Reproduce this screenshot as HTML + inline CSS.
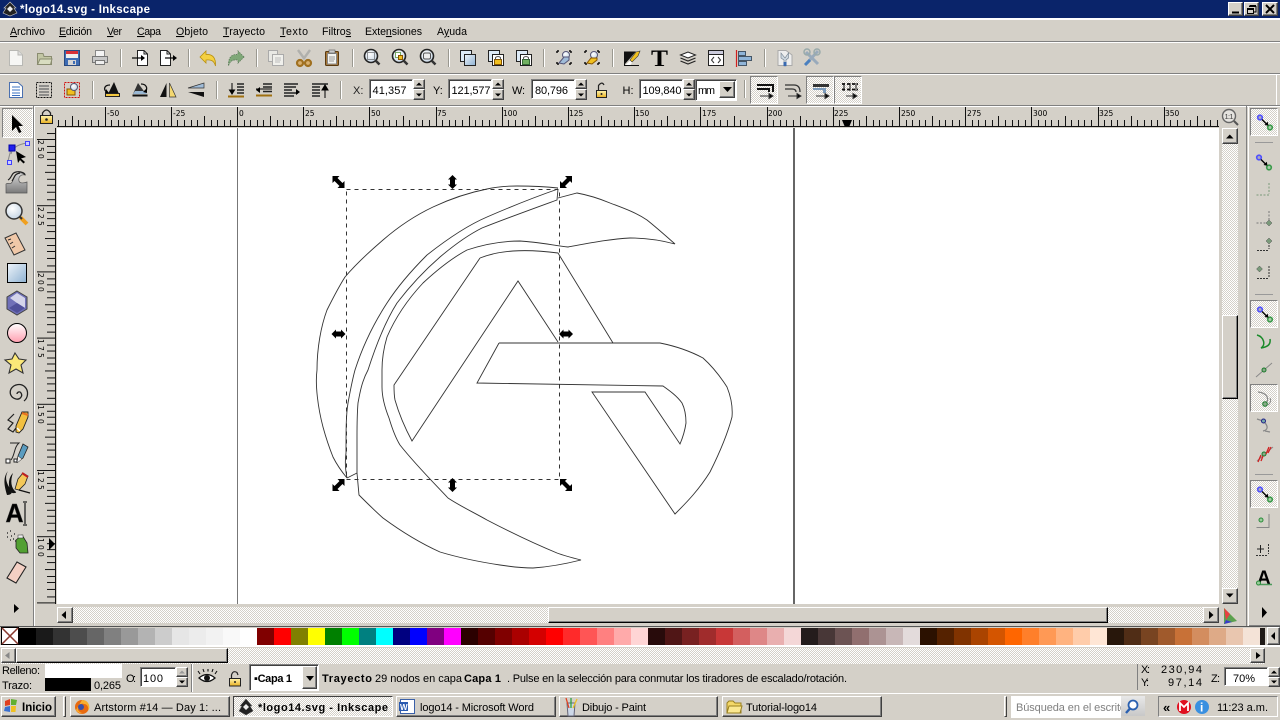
<!DOCTYPE html>
<html><head><meta charset="utf-8"><title>logo14.svg - Inkscape</title>
<style>
html,body{margin:0;padding:0;width:1280px;height:720px;overflow:hidden;background:#d4d0c8}
div{position:absolute;box-sizing:border-box}
.r{background:#d4d0c8;border:1px solid;border-color:#fff #404040 #404040 #fff;box-shadow:inset -1px -1px 0 #808080}
.s{background:#fff;border:1px solid;border-color:#808080 #fff #fff #808080;box-shadow:inset 1px 1px 0 #404040}
.h{background-image:repeating-conic-gradient(#fff 0 25%,#d4d0c8 0 50%);background-size:2px 2px}
.p{border:1px solid;border-color:#808080 #fff #fff #808080}
svg{position:absolute;left:0;top:0}
text{font-family:"Liberation Sans",sans-serif;font-size:11px;fill:#000}
.menu text{font-size:10.6px}
.b{font-weight:bold}
.m{font-family:"DejaVu Sans",sans-serif;font-size:7.5px;fill:#000}
</style></head><body>
<div style="left:0;top:0;width:1280px;height:18px;background:#0a246a"></div>
<div style="left:0;top:18px;width:1280px;height:2px;background:#fff"></div>
<div style="left:0;top:41px;width:1280px;height:1px;background:#808080"></div>
<div style="left:0;top:42px;width:1280px;height:1px;background:#fff"></div>
<div style="left:0;top:73px;width:1280px;height:1px;background:#808080"></div>
<div style="left:0;top:74px;width:1280px;height:1px;background:#fff"></div>
<div style="left:0;top:105px;width:1280px;height:1px;background:#808080"></div>
<div style="left:0;top:106px;width:1280px;height:1px;background:#fff"></div>
<div class="r" style="left:1228px;top:2px;width:15px;height:14px"></div>
<div class="r" style="left:1244px;top:2px;width:15px;height:14px"></div>
<div class="r" style="left:1262px;top:2px;width:16px;height:14px"></div>
<!-- canvas -->
<div style="left:57px;top:128px;width:1162px;height:476px;background:#fff"></div>
<div style="left:237px;top:128px;width:1px;height:476px;background:#777"></div>
<div style="left:793px;top:128px;width:2px;height:476px;background:#666"></div>
<!-- vscroll -->
<div class="h" style="left:1222px;top:128px;width:16px;height:476px"></div>
<div class="r" style="left:1222px;top:128px;width:16px;height:16px"></div>
<div class="r" style="left:1222px;top:315px;width:16px;height:84px;border-color:#fff #000 #000 #fff"></div>
<div class="r" style="left:1222px;top:588px;width:16px;height:16px"></div>
<!-- hscroll -->
<div class="h" style="left:57px;top:607px;width:1162px;height:16px"></div>
<div class="r" style="left:57px;top:607px;width:16px;height:16px"></div>
<div class="r" style="left:548px;top:607px;width:560px;height:16px;border-color:#fff #000 #000 #fff"></div>
<div class="r" style="left:1203px;top:607px;width:16px;height:16px"></div>
<!-- side lines -->
<div style="left:33px;top:106px;width:1px;height:520px;background:#808080"></div>
<div style="left:34px;top:106px;width:1px;height:520px;background:#fff"></div>
<div style="left:1246px;top:106px;width:1px;height:520px;background:#808080"></div>
<div style="left:1248px;top:106px;width:1px;height:520px;background:#fff"></div>
<div style="left:1249px;top:625px;width:31px;height:1px;background:#808080"></div>
<div style="left:1276px;top:75px;width:1px;height:30px;background:#fff"></div>
<!-- pressed toggles -->
<div class="h p" style="left:2px;top:108px;width:31px;height:30px"></div>
<div class="h p" style="left:1250px;top:108px;width:28px;height:28px"></div>
<div class="h p" style="left:1250px;top:300px;width:28px;height:28px"></div>
<div class="h p" style="left:1250px;top:384px;width:28px;height:28px"></div>
<div class="h p" style="left:1250px;top:480px;width:28px;height:28px"></div>
<div class="h p" style="left:750px;top:76px;width:28px;height:28px"></div>
<div class="h p" style="left:806px;top:76px;width:28px;height:28px"></div>
<div class="h p" style="left:834px;top:76px;width:28px;height:28px"></div>
<!-- inputs row 2 -->
<div class="s" style="left:369px;top:79px;width:44px;height:20px"></div>
<div class="r" style="left:413px;top:79px;width:12px;height:10px"></div><div class="r" style="left:413px;top:89px;width:12px;height:11px"></div>
<div class="s" style="left:448px;top:79px;width:44px;height:20px"></div>
<div class="r" style="left:492px;top:79px;width:12px;height:10px"></div><div class="r" style="left:492px;top:89px;width:12px;height:11px"></div>
<div class="s" style="left:531px;top:79px;width:44px;height:20px"></div>
<div class="r" style="left:575px;top:79px;width:12px;height:10px"></div><div class="r" style="left:575px;top:89px;width:12px;height:11px"></div>
<div class="s" style="left:639px;top:79px;width:44px;height:20px"></div>
<div class="r" style="left:683px;top:79px;width:12px;height:10px"></div><div class="r" style="left:683px;top:89px;width:12px;height:11px"></div>
<div class="s" style="left:695px;top:79px;width:42px;height:22px"></div>
<div class="r" style="left:719px;top:81px;width:16px;height:17px"></div>
<!-- palette scrollbars -->
<div style="left:0;top:626px;width:1280px;height:1px;background:#555"></div>
<div style="left:1px;top:627px;width:18px;height:18px;background:#fff;border:1px solid #000"></div>
<div class="r" style="left:1267px;top:627px;width:13px;height:18px"></div>
<div style="left:0;top:645px;width:1280px;height:2px;background:#fff"></div>
<div class="h" style="left:1px;top:648px;width:1264px;height:16px"></div>
<div class="r" style="left:1px;top:648px;width:15px;height:15px"></div>
<div class="r" style="left:16px;top:648px;width:212px;height:15px;border-color:#fff #000 #000 #fff"></div>
<div class="r" style="left:1250px;top:648px;width:15px;height:15px"></div>
<!-- status -->
<div style="left:45px;top:664px;width:77px;height:14px;background:#fff"></div>
<div style="left:45px;top:678px;width:46px;height:13px;background:#000"></div>
<div class="s" style="left:140px;top:667px;width:36px;height:20px"></div>
<div class="r" style="left:176px;top:667px;width:12px;height:10px"></div><div class="r" style="left:176px;top:677px;width:12px;height:10px"></div>
<div style="left:191px;top:664px;width:1px;height:28px;background:#808080"></div>
<div style="left:192px;top:664px;width:1px;height:28px;background:#fff"></div>
<div class="s" style="left:249px;top:664px;width:70px;height:27px"></div>
<div class="r" style="left:302px;top:666px;width:15px;height:23px"></div>
<div style="left:1137px;top:664px;width:1px;height:26px;background:#808080"></div>
<div class="s" style="left:1224px;top:667px;width:44px;height:19px"></div>
<div class="r" style="left:1268px;top:667px;width:12px;height:10px"></div><div class="r" style="left:1268px;top:677px;width:12px;height:10px"></div>
<!-- taskbar -->
<div style="left:0;top:693px;width:1280px;height:1px;background:#fff"></div>
<div class="r" style="left:1px;top:696px;width:55px;height:21px"></div>
<div class="r" style="left:63px;top:696px;width:3px;height:21px;box-shadow:none"></div>
<div class="r" style="left:70px;top:696px;width:160px;height:21px"></div>
<div class="h" style="left:233px;top:696px;width:160px;height:21px;border:1px solid;border-color:#404040 #fff #fff #404040"></div>
<div class="r" style="left:396px;top:696px;width:160px;height:21px"></div>
<div class="r" style="left:559px;top:696px;width:159px;height:21px"></div>
<div class="r" style="left:722px;top:696px;width:160px;height:21px"></div>
<div class="r" style="left:1004px;top:696px;width:3px;height:21px;box-shadow:none"></div>
<div style="left:1011px;top:696px;width:110px;height:22px;background:#fff"></div>
<div style="left:1121px;top:696px;width:24px;height:20px;background:linear-gradient(#e8e8e8,#c8c8c8)"></div>
<div class="p" style="left:1158px;top:696px;width:120px;height:21px"></div>

<svg width="1280" height="720" viewBox="0 0 1280 720" xmlns="http://www.w3.org/2000/svg">
<defs>
<linearGradient id="gb" x1="0" y1="0" x2="1" y2="1"><stop offset="0" stop-color="#eef4fa"/><stop offset="1" stop-color="#8fb2d2"/></linearGradient>
<linearGradient id="gp" x1="0" y1="0" x2="0" y2="1"><stop offset="0" stop-color="#fff"/><stop offset="1" stop-color="#ff9fb0"/></linearGradient>
<linearGradient id="gg" x1="0" y1="0" x2="0" y2="1"><stop offset="0" stop-color="#d8d8d8"/><stop offset="1" stop-color="#7a7a7a"/></linearGradient>
<linearGradient id="gy" x1="0" y1="0" x2="0" y2="1"><stop offset="0" stop-color="#fff5b0"/><stop offset="1" stop-color="#e8b020"/></linearGradient>
<radialGradient id="gm" cx=".4" cy=".35" r=".7"><stop offset="0" stop-color="#fff"/><stop offset="1" stop-color="#c4d4e4"/></radialGradient>
<pattern id="rt" patternUnits="userSpaceOnUse" x="237" y="107" width="331" height="20">
<path shape-rendering="crispEdges" stroke="#111" stroke-width="1" d="M.5 0V20M66.5 0V20M132.5 0V20M199.5 0V20M265.5 0V20
M33.5 9V20M99.5 9V20M166.5 9V20M232.5 9V20M298.5 9V20
M7.5 13V20M13.5 13V20M20.5 13V20M26.5 13V20M40.5 13V20M46.5 13V20M53.5 13V20M60.5 13V20
M73.5 13V20M79.5 13V20M86.5 13V20M93.5 13V20M106.5 13V20M113.5 13V20M119.5 13V20M126.5 13V20
M139.5 13V20M146.5 13V20M152.5 13V20M159.5 13V20M172.5 13V20M179.5 13V20M185.5 13V20M192.5 13V20
M205.5 13V20M212.5 13V20M218.5 13V20M225.5 13V20M238.5 13V20M245.5 13V20M252.5 13V20M258.5 13V20
M271.5 13V20M278.5 13V20M285.5 13V20M291.5 13V20M305.5 13V20M311.5 13V20M318.5 13V20M324.5 13V20"/>
</pattern>
<pattern id="rl" patternUnits="userSpaceOnUse" x="37" y="139" width="19" height="66.2">
<path shape-rendering="crispEdges" stroke="#111" stroke-width="1" d="M0 .5H19M10 7.5H19M10 13.5H19M10 20.5H19M10 26.5H19M8 33.5H19M10 40.5H19M10 46.5H19M10 53.5H19M10 60.5H19"/>
</pattern>
<path id="hd" d="M-6-6H1L-1-4 4 1 6-1V6H-1L1 4-4-1-6 1Z" fill="#000"/>
<path id="hv" d="M0-7 4.500-2.500H2.500V2.500H4.500L0 7-4.500 2.500H-2.500V-2.500H-4.500Z" fill="#000"/>
<g id="sn"><circle cx="-5" cy="-4.500" r="2.300" fill="#aab" stroke="#5050ff" stroke-width="1.600"/><circle cx="5" cy="5.500" r="2.300" fill="#aca" stroke="#3a9a4a" stroke-width="1.600"/><path d="M-3-2.500 2 2.500" stroke="#000" stroke-width="1.300"/><path d="M3.500 3.800-.5 3 2.800-.3Z"/></g>
<g id="mg"><circle cx="0" cy="0" r="6.500" fill="url(#gm)" stroke="#222" stroke-width="1.600"/><path d="M4.500 4.500 8.500 8.500" stroke="#333" stroke-width="2.500"/></g>
<g id="up"><path d="M-3 1.500H3L0-1.500Z"/></g>
<g id="dn"><path d="M-3-1.500H3L0 1.500Z"/></g>
</defs>

<!-- title -->
<path d="M10 2 16 8 14 8 17 13 10 16 3 13 6 8 4 8Z" fill="#222" stroke="#ccc" stroke-width=".6"/><path d="M7 9 10 6 13 9 10 12Z" fill="#eee"/>
<text x="20" y="13" class="b" style="fill:#fff;font-size:11.500px" textLength="130">*logo14.svg - Inkscape</text>
<path d="M1232 11.500h7v2h-7z"/><path d="M1249 6.500h7v5.500h-2M1247.500 8.500h6v5h-6zM1247.500 9.500h6M1249.500 5.500h6.500" fill="none" stroke="#000"/><path d="M1266 5 1274 13M1274 5 1266 13" stroke="#000" stroke-width="2"/>

<!-- menu -->
<g class="menu">
<text x="10" y="35" textLength="35"><tspan text-decoration="underline">A</tspan>rchivo</text>
<text x="59" y="35" textLength="33"><tspan text-decoration="underline">E</tspan>dición</text>
<text x="107" y="35" textLength="15"><tspan text-decoration="underline">V</tspan>er</text>
<text x="137" y="35" textLength="24"><tspan text-decoration="underline">C</tspan>apa</text>
<text x="176" y="35" textLength="32"><tspan text-decoration="underline">O</tspan>bjeto</text>
<text x="223" y="35" textLength="42"><tspan text-decoration="underline">T</tspan>rayecto</text>
<text x="280" y="35" textLength="28"><tspan text-decoration="underline">T</tspan>exto</text>
<text x="322" y="35" textLength="29">Filtro<tspan text-decoration="underline">s</tspan></text>
<text x="365" y="35" textLength="57">Exte<tspan text-decoration="underline">n</tspan>siones</text>
<text x="437" y="35" textLength="30">A<tspan text-decoration="underline">y</tspan>uda</text>
</g>

<!-- toolbar separators -->
<path shape-rendering="crispEdges" stroke="#9a9890" d="M120.500 49V67M188.500 49V67M256.500 49V67M352.500 49V67M448.500 49V67M543.500 49V67M612.500 49V67M764.500 49V67M92.500 81V99M216.500 81V99M340.500 81V99M744.500 80V98"/>
<path shape-rendering="crispEdges" stroke="#fff" d="M121.500 49V67M189.500 49V67M257.500 49V67M353.500 49V67M449.500 49V67M544.500 49V67M613.500 49V67M765.500 49V67M93.500 81V99M217.500 81V99M341.500 81V99M745.500 80V98"/>

<!-- row 1 -->
<path d="M9.500 50.500H18L22.500 55V65.500H9.500Z" fill="#f6f6f4" stroke="#b8b8b4"/><path d="M18 50.500V55H22.500" fill="#ddd" stroke="#b8b8b4"/>
<path d="M37.500 53.500V64.500H51.500V56.500H44L43 53.500Z" fill="#c2c6a4" stroke="#8a8c70"/><path d="M37.500 64.500 40 59H52L50.500 64.500Z" fill="#d8dcc0" stroke="#8a8c70"/>
<rect x="64.500" y="50.500" width="15" height="15" fill="#3d6cb4" stroke="#2a4a80"/><rect x="66" y="51" width="12" height="3" fill="#d83038"/><rect x="66" y="54" width="12" height="4" fill="#eee"/><rect x="68" y="60" width="8" height="5" fill="#d4d4d4"/><rect x="73" y="61" width="2" height="3" fill="#3d6cb4"/>
<rect x="95.500" y="50.500" width="9" height="6" fill="#f4f4f4" stroke="#888"/><path d="M92.500 56.500H107.500V62.500H92.500Z" fill="#c8c8c8" stroke="#777"/><rect x="95.500" y="60.500" width="9" height="4" fill="#eee" stroke="#777"/>
<path d="M137.500 50.500H144L147.500 54V65.500H137.500Z" fill="#fff" stroke="#222"/><path d="M144 50.500V54H147.500" fill="none" stroke="#222"/><path d="M132 58H142" stroke="#000" stroke-width="1.200"/><path d="M145 58 141 55V61Z"/>
<path d="M160.500 50.500H167L170.500 54V65.500H160.500Z" fill="#fff" stroke="#222"/><path d="M167 50.500V54H170.500" fill="none" stroke="#222"/><path d="M165 58H174" stroke="#000" stroke-width="1.200"/><path d="M177 58 173 55V61Z"/>
<path d="M200 57 206 51V54.500C212 54 216 57 215.500 66 214 60.500 211 59.500 206 60V63Z" fill="#f4d040" stroke="#b89010" stroke-width=".8"/>
<path d="M244 57 238 51V54.500C232 54 228 57 228.500 66 230 60.500 233 59.500 238 60V63Z" fill="#7fa878" stroke="#5a7a58" stroke-width=".8" stroke-dasharray="1.500 1"/>
<rect x="268.500" y="50.500" width="9" height="11" fill="#e8e8e4" stroke="#aaa"/><rect x="272.500" y="54.500" width="11" height="11" fill="#f0f0ec" stroke="#aaa"/><path d="M275 58H281M275 60H281M275 62H280" stroke="#bbb"/>
<path d="M298 50 304.500 59M310 50 303.500 59" stroke="#b0b0ac" stroke-width="2.400"/><circle cx="300" cy="63" r="3" fill="#d8b070" stroke="#a07020" stroke-width="2.200"/><circle cx="308" cy="63" r="3" fill="#d8b070" stroke="#a07020" stroke-width="2.200"/>
<rect x="325.500" y="51.500" width="13" height="14" rx="1" fill="#a87838" stroke="#5a3a10"/><rect x="327.500" y="53.500" width="9" height="10.500" fill="#f4f4f0" stroke="#888"/><rect x="329" y="50" width="6" height="3" fill="#ccc" stroke="#555" stroke-width=".6"/><path d="M329 57H335M329 59H335M329 61H334" stroke="#999"/>
<g transform="translate(371,56)"><use href="#mg"/><rect x="-3.500" y="-3.500" width="7" height="7" fill="none" stroke="#333" stroke-dasharray="1 1"/></g>
<g transform="translate(399,56)"><use href="#mg"/><rect x="-3.500" y="-3.500" width="5" height="5" fill="#fff" stroke="#7a6"/><rect x="-.5" y="-.5" width="4" height="4" fill="#f0c020" stroke="#850"/></g>
<g transform="translate(427,56)"><use href="#mg"/><rect x="-3.500" y="-3" width="7" height="6" rx="1.500" fill="#eee" stroke="#555"/></g>
<rect x="460.500" y="50.500" width="11" height="11" fill="#ddeaf6" stroke="#222"/><rect x="464.500" y="54.500" width="11" height="11" fill="url(#gb)" stroke="#222"/>
<rect x="488.500" y="50.500" width="11" height="11" fill="#ddeaf6" stroke="#222"/><rect x="492.500" y="54.500" width="11" height="11" fill="#fff" stroke="#222"/><rect x="494.500" y="59.500" width="7" height="5" fill="#f0c020" stroke="#850"/><path d="M495.500 59.500V57.500Q498 55.500 500.500 57.500V59.500" fill="none" stroke="#555"/>
<rect x="516.500" y="50.500" width="11" height="11" fill="#ddeaf6" stroke="#222"/><rect x="520.500" y="54.500" width="11" height="11" fill="#fff" stroke="#222"/><rect x="522.500" y="59.500" width="7" height="5" fill="#70b060" stroke="#363"/><path d="M523.500 59.500V57.500Q526 55.500 528.500 57.500V59.500" fill="none" stroke="#555"/>
<g><path d="M557 51h2M569 51h2M557 64h2M569 64h2M557 51v2M571 51v2M557 62v2M571 62v2" stroke="#111" stroke-width="1.500"/><circle cx="566" cy="55" r="3.500" fill="url(#gm)" stroke="#557"/><path d="M559 63 564 57H569V60L564 64Z" fill="#a0bcd8" stroke="#557"/></g>
<g><path d="M585 51h2M597 51h2M585 64h2M597 64h2M585 51v2M599 51v2M585 62v2M599 62v2" stroke="#111" stroke-width="1.500"/><circle cx="594" cy="55" r="3.500" fill="url(#gm)" stroke="#557"/><path d="M587 63 591 58H597V60L592 64Z" fill="#f0c020" stroke="#850"/></g>
<path d="M624.500 51.500H636L625 64Z" fill="#111"/><path d="M625 65.500 639 52V53L630 65.500Z" fill="#fff"/><path d="M624.500 51.500V65.500H639" fill="none" stroke="#111"/><path d="M630 60 636 52 640 51 638 56 632 62Z" fill="#f0c020" stroke="#333" stroke-width=".6"/>
<text x="651" y="66" style="font-family:'Liberation Serif',serif;font-weight:bold;font-size:23px" textLength="17" lengthAdjust="spacingAndGlyphs">T</text>
<path d="M680.500 55 688 52 695.500 55 688 58Z" fill="#fff" stroke="#222"/><path d="M680.500 58 688 61 695.500 58M680.500 61 688 64 695.500 61" fill="none" stroke="#222" stroke-width="1.200"/>
<rect x="708.500" y="50.500" width="15" height="15" fill="#fff" stroke="#222"/><rect x="709" y="51" width="14" height="3" fill="#ccd"/><path d="M708.500 54.500H723.500" stroke="#222"/><path d="M714 57 711.500 60 714 63M718 57 720.500 60 718 63" fill="none" stroke="#333"/>
<path d="M736.500 50V67" stroke="#d02020" stroke-width="1.200"/><rect x="738.500" y="51.500" width="7" height="4" fill="#8fb4d8" stroke="#456"/><rect x="738.500" y="56.500" width="13" height="4" fill="#8fb4d8" stroke="#456"/><rect x="738.500" y="61.500" width="8" height="4" fill="#8fb4d8" stroke="#456"/>
<path d="M778 50.500H786L792 55V65.500H778Z" fill="#eee" stroke="#aaa"/><path d="M781 53 785 58 788.500 53V58L786 60V66H784V60L781 58Z" fill="#cfd8e0" stroke="#6a7a88" stroke-width=".6"/><rect x="783.500" y="62" width="3" height="4" fill="#3a6ab0"/>
<path d="M806 52 818 64M818 51 806 64" stroke="#9ab" stroke-width="3"/><circle cx="807" cy="52" r="3" fill="none" stroke="#9aa" stroke-width="1.500"/><circle cx="817" cy="52" r="3" fill="none" stroke="#9aa" stroke-width="1.500"/><path d="M805 65 810 60" stroke="#4a80c0" stroke-width="3"/>

<!-- row 2 -->
<path d="M9.500 82.500H18L22.500 86.500V97.500H9.500Z" fill="#fff" stroke="#4a70b0"/><path d="M12 87H20M12 90H20M12 93H20M12 95.500H20" stroke="#3a70c0"/>
<rect x="36.500" y="82.500" width="15" height="15" fill="none" stroke="#111" stroke-dasharray="2 1"/><path d="M39 86H49M39 89H49M39 92H49M39 95H49" stroke="#777" stroke-width="1.500"/>
<rect x="64.500" y="82.500" width="15" height="15" fill="none" stroke="#d01010" stroke-dasharray="2 1"/><rect x="67" y="89" width="8" height="6" fill="#f0c020" stroke="#850"/><circle cx="74" cy="87" r="3.500" fill="url(#gm)" stroke="#557"/>
<path d="M108 94 114 82 119 94Z" fill="#111"/><rect x="105.500" y="93.500" width="14" height="3" fill="#f4c840" stroke="#222"/><path d="M110 85C104 85 103 90 107 92" fill="none" stroke="#111" stroke-width="1.300"/><path d="M105 93 109 93 106 89Z"/>
<path d="M133 94 138 83 146 94Z" fill="#333"/><path d="M133 94H147L145 91H135Z" fill="#9ab8d4"/><rect x="132.500" y="94.500" width="15" height="2" fill="#111"/><path d="M141 84C147 84 148 89 145 92" fill="none" stroke="#111" stroke-width="1.300"/><path d="M147 93 143 92 147 88Z"/>
<path d="M160 97 166.500 83V97Z" fill="#111"/><path d="M169.500 97V83L176 97Z" fill="#f4d870" stroke="#333" stroke-width=".7"/>
<path d="M188 88 204 83V88Z" fill="#a0bcd8" stroke="#333" stroke-width=".7"/><path d="M188 92 204 97V92Z" fill="#111"/>
<path d="M228 96.500H244" stroke="#a07010" stroke-width="2"/><path d="M232 83V92M232 94 229.500 90H234.500Z" stroke="#000"/><path d="M237 84H244M237 87H244M237 90H244M237 93H244" stroke="#222" stroke-width="1.500"/>
<path d="M256 89H272" stroke="#000"/><path d="M256 95.500H272" stroke="#a07010" stroke-width="2"/><path d="M263 84H272M263 87H272M263 91.500H272" stroke="#222" stroke-width="1.500"/><path d="M256 90 260 87V93Z"/>
<path d="M284 84H298M284 87H296M284 90H292M284 93H298M284 96H294" stroke="#222" stroke-width="1.500"/><path d="M300 92 296 89V95Z"/>
<path d="M312 84H328" stroke="#222" stroke-width="1.500"/><path d="M312 87H320M312 90H320M312 93H320M312 96H320" stroke="#222" stroke-width="1.500"/><path d="M325 98V87M325 85 322 90H328Z" stroke="#000"/>
<text x="353" y="94" style="fill:#222">X:</text>
<text x="372.500" y="94" textLength="34">41,357</text>
<text x="433" y="94">Y:</text>
<text x="451.500" y="94" textLength="39">121,577</text>
<text x="512" y="94" textLength="13">W:</text>
<text x="535" y="94" textLength="33">80,796</text>
<text x="622.500" y="94">H:</text>
<text x="642.500" y="94" textLength="39">109,840</text>
<text x="698" y="94" textLength="17">mm</text>
<g><use href="#up" x="419" y="84"/><use href="#dn" x="419" y="95"/><use href="#up" x="498" y="84"/><use href="#dn" x="498" y="95"/><use href="#up" x="581" y="84"/><use href="#dn" x="581" y="95"/><use href="#up" x="689" y="84"/><use href="#dn" x="689" y="95"/><path d="M723 87H732L727.500 92Z"/></g>
<path d="M596.500 90.500H606.500V97.500H596.500Z" fill="url(#gy)" stroke="#222"/><path d="M598.500 90V85.500Q602 81 604 85" fill="none" stroke="#222" stroke-width="1.200"/><circle cx="601.500" cy="94" r="1" fill="#222"/>
<!-- toggle icons -->
<path d="M757 85H773V92M757 89H769V92" fill="none" stroke="#111" stroke-width="2"/><path d="M760 96H770M773 96 769 93.500V98.500Z" stroke="#333"/>
<path d="M785 85H794Q800 85 800 92M785 89H792Q796 89 796 92" fill="none" stroke="#333" stroke-width="1.300"/><path d="M788 96H798M801 96 797 93.500V98.500Z" stroke="#333"/>
<rect x="813" y="84" width="16" height="3" fill="#333"/><path d="M813 88H826V93H823V90H813Z" fill="#7d9cbc"/><path d="M816 96H826M829 96 825 93.500V98.500Z" stroke="#333"/>
<path d="M842 84H858M842 89.500H858" stroke="#111" stroke-width="1.800" stroke-dasharray="3 2"/><path d="M844 83V91M850 83V91M856 83V91" stroke="#111"/><path d="M846 96H854M857 96 853 93.500V98.500Z" stroke="#333"/>

<!-- rulers -->
<rect x="57" y="107" width="1162" height="20" fill="url(#rt)"/>
<path d="M57 126.500H1219" stroke="#111" shape-rendering="crispEdges"/>
<rect x="37" y="128" width="19" height="476" fill="url(#rl)"/>
<path d="M55.500 128V604" stroke="#111" shape-rendering="crispEdges"/>
<g>
<text class="m" x="107" y="116">-50</text><text class="m" x="173" y="116">-25</text><text class="m" x="239" y="116">0</text><text class="m" x="305" y="116">25</text><text class="m" x="371" y="116">50</text><text class="m" x="437" y="116">75</text><text class="m" x="503" y="116">100</text><text class="m" x="569" y="116">125</text><text class="m" x="635" y="116">150</text><text class="m" x="702" y="116">175</text><text class="m" x="768" y="116">200</text><text class="m" x="834" y="116">225</text><text class="m" x="901" y="116">250</text><text class="m" x="967" y="116">275</text><text class="m" x="1033" y="116">300</text><text class="m" x="1099" y="116">325</text><text class="m" x="1165" y="116">350</text>
<text class="m" x="38 38 38" y="140 147 154" rotate="90">250</text>
<text class="m" x="38 38 38" y="207 214 221" rotate="90">225</text>
<text class="m" x="38 38 38" y="273 280 287" rotate="90">200</text>
<text class="m" x="38 38 38" y="339 346 353" rotate="90">175</text>
<text class="m" x="38 38 38" y="405 412 419" rotate="90">150</text>
<text class="m" x="38 38 38" y="471 478 485" rotate="90">125</text>
<text class="m" x="38 38 38" y="538 545 552" rotate="90">100</text>
</g>
<path d="M842 120H852L849.500 126H844.500Z"/><path d="M49 538V550L55 544Z"/>
<rect x="40.500" y="115.500" width="12" height="8" fill="url(#gy)" stroke="#222"/><path d="M42.500 115V113Q46.500 107 50.500 113V115" fill="none" stroke="#222" stroke-width="1.300"/><circle cx="46.500" cy="119.500" r="1.300" fill="#222"/>

<!-- logo -->
<g fill="none" stroke="#333" stroke-width=".9">
<path d="M558 188C540 186 529 186 517 186 505 186 496 187 487 189 467 193 450 199 433 207 414 216 398 227 383 240 369 252 356 264 345 277 338 288 333 298 327 310 321 326 317 348 317 370 315 385 318 408 323 427 326 438 329 447 333 457 337 465 342 472 347 478 345 468 345 460 346 453 346 430 346 415 348 403 350 392 352 381 355 370 363 345 374 323 387 303 398 286 412 270 427 255 446 240 466 226 487 217 510 207 535 197 558 189"/>
<path d="M558 189 557 200C535 208 510 217 482 228 466 236 453 246 440 257 425 270 410 286 397 303 385 322 376 345 368 370 362 381 360 392 358 403 357 415 357 425 357 437 357 450 357 462 357 473L347 478"/>
<path d="M357 473 359 495C367 503 375 511 383 518 402 532 420 543 440 552 460 558 480 562 500 565 513 567 523 568 533 568 548 567 565 564 581 560 573 558 565 556 557 553 535 544 510 532 487 520 473 512 460 506 448 498 432 481 415 464 400 445 395 437 392 428 389 418 385 408 382 396 382 387 382 381 382 376 382 370 382 358 384 347 387 337 396 316 409 298 423 283 437 270 452 258 467 250 485 244 502 241 520 241 537 242 552 245 568 247 590 243 610 239 630 238 646 238 660 240 675 244 666 236 657 228 647 220 635 212 623 208 610 203 598 198 588 195 577 193L558 198"/>
<path d="M480 258C490 254 500 252 513 251 528 250 543 251 558 253L613 343M480 258 394 385C394 390 394 395 395 400 399 414 405 428 412 441L518 281 558 342M499 343H660C675 346 690 351 703 358 713 367 720 376 727 387 731 397 733 406 732 417 727 436 719 454 710 472 705 480 699 488 693 495 687 502 681 508 675 514L592 392H645L680 444C683 437 685 430 686 423 686 416 685 409 682 403 677 396 670 391 663 386L477 383 499 343"/>
</g>
<rect x="346.500" y="189.500" width="213" height="290" fill="none" stroke="#333" stroke-width="1" stroke-dasharray="4 4" shape-rendering="crispEdges"/>
<use href="#hd" x="338.500" y="182"/><use href="#hd" transform="translate(566,182) scale(-1,1)"/><use href="#hd" transform="translate(338.500,485) scale(-1,1)"/><use href="#hd" x="566" y="485"/>
<use href="#hv" x="452.500" y="182"/><use href="#hv" x="452.500" y="485"/>
<use href="#hv" transform="translate(338.500,334) rotate(90)"/><use href="#hv" transform="translate(566,334) rotate(90)"/>

<!-- left tools -->
<path d="M12 115V131L16 127 19 133 21.500 132 18.500 126H23Z" fill="#000"/>
<path d="M11 154Q13 145 27 143" fill="none" stroke="#888"/><path d="M11 149 8 161" stroke="#888"/><rect x="7.500" y="160.500" width="4" height="4" fill="#ccf" stroke="#4040ff"/><rect x="25.500" y="141.500" width="4" height="4" fill="#ccf" stroke="#4040ff"/><rect x="9" y="145" width="6" height="6" fill="#2020ee" stroke="#0000aa"/><path d="M16 151 26 157 21 158.500 25 162 23.500 163.500 20 160 18 163Z"/>
<path d="M6 193V184C9 182 11 186 13 180 15 173 21 171 25 175 21 174 18 177 19 181 20 184 24 183 27 182V193Z" fill="url(#gg)" stroke="#555" stroke-width=".7"/><path d="M8 180C12 178 11 173 16 172 20 171 25 173 25 175M12 181C15 177 14 174 20 173" fill="none" stroke="#222" stroke-width="1.200"/>
<circle cx="14" cy="211" r="8" fill="url(#gm)" stroke="#333" stroke-width="1.500"/><path d="M20.500 217.500 27 224" stroke="#f0a020" stroke-width="4"/><path d="M20 217 22 219" stroke="#333" stroke-width="2"/>
<path d="M5 238 16 233 25 250 14 255Z" fill="#f0c8a8" stroke="#333"/><path d="M8 240 11 239M10 244 13 242M12 248 15 246" stroke="#333"/>
<rect x="7.500" y="263.500" width="19" height="19" fill="url(#gb)" stroke="#000"/>
<path d="M17 291 27 297V309L17 315 7 309V297Z" fill="#7070b8" stroke="#444"/><path d="M17 303 10 298 17 293 25 298 25 308 17 303Z" fill="#d4d4ea"/><path d="M17 303 25 308 17 313 9 308Z" fill="#50509a"/>
<circle cx="17" cy="333" r="9.500" fill="url(#gp)" stroke="#000"/>
<path d="M15 353 19 359 26 360 21 365 23 373 16 369 9 373 11 365 5 360 12 359Z" fill="#fbe878" stroke="#333" stroke-width="1.100"/>
<path d="M17 394c0-2 3-3 4-1 2 3-1 7-5 6-5-1-7-6-5-10 3-5 10-6 14-2 4 4 3 11-1 14" fill="none" stroke="#222" stroke-width="1.300"/>
<path d="M14 414 8 420 13 423 8 429 13 432 16 428" fill="none" stroke="#222" stroke-width="1.200"/><path d="M19 433 16 432 16 426 22 412 28 412 28 417 23 429Z" fill="#f2c040" stroke="#222" stroke-width=".9"/><path d="M22 413 28 415" stroke="#e87020" stroke-width="2"/><path d="M17 428 20 431" stroke="#fff" stroke-width="1.500"/>
<path d="M10 443H19C14 447 15 455 11 460" fill="none" stroke="#222" stroke-width="1"/><rect x="6" y="459" width="4" height="4" fill="#fff" stroke="#222"/><rect x="14" y="459" width="3" height="3" fill="#fff" stroke="#222"/><path d="M17 462 18 456 23 444 28 447 23 458Z" fill="#5a9cc0" stroke="#222" stroke-width=".8"/><path d="M18 456 22 459 17 463Z" fill="#eee" stroke="#222" stroke-width=".5"/>
<path d="M8 471C4 478 7 484 11 490 14 495 7 495 7 495 5 488 2 478 8 471ZM13 473C10 481 11 488 16 492 17 493 12 494 11 492 8 486 8 478 13 473Z" fill="#111"/><path d="M15 489 18 479 23 473 28 476 25 484 19 490Z" fill="#f4c858" stroke="#222" stroke-width=".8"/><path d="M22 473 28 477" stroke="#c02020" stroke-width="2"/><path d="M19 490 30 493" stroke="#111" stroke-width="1.300"/>
<text x="5.500" y="522" class="b" style="font-size:26px;stroke:#333;stroke-width:.5" textLength="18" lengthAdjust="spacingAndGlyphs">A</text><path d="M23 502h4M25 503V524M23 525h4" stroke="#222" stroke-width="1.300" fill="none"/>
<path d="M16 540 22 535 27 543 28 553 20 553 16 548Z" fill="#52a032" stroke="#222" stroke-width=".8"/><rect x="18" y="535" width="5" height="3" fill="#eee" stroke="#333" stroke-width=".5"/>
<path d="M7 533h1M10 531h1M7 537h1M11 536h1M14 534h1M10 540h1M13 539h1M15 541h1" stroke="#333" stroke-width="1.500"/>
<path d="M7 578 17 562 26 567 16 583Z" fill="#f4d0c4" stroke="#222" stroke-width="1.100"/>
<path d="M14 604V613L19 608.500Z"/>

<!-- scroll arrows -->
<g><path d="M1226 138.500H1233.500L1229.800 134.500Z"/><path d="M1226 593.500H1233.500L1229.800 597.500Z"/><path d="M61.500 615 66 611V619Z"/><path d="M1213.500 615 1209 611V619Z"/><path d="M1271 636 1275 632V640Z"/><path d="M5 655.500 9.500 652V659Z" fill="#888"/><path d="M1260.500 655.500 1256 652V659Z"/></g>

<!-- color wheel -->
<path d="M1224 608 1224 624 1236 620Z" fill="url(#gy)"/><path d="M1224 608 1237 621 1224 624Z" fill="#5aa050"/><path d="M1224 608 1230 614 1226 620Z" fill="#e84040"/><path d="M1226 620 1232 622 1224 624Z" fill="#3a3ac8"/>
<!-- zoom 1:1 -->
<circle cx="1229" cy="116" r="6.500" fill="#e4e2de" stroke="#666" stroke-width="1.400"/><path d="M1234 121 1238 125" stroke="#555" stroke-width="2"/><text x="1224.500" y="119" style="font-size:7.500px;fill:#444" textLength="9">1:1</text>

<!-- right snap bar -->
<use href="#sn" x="1265" y="122"/>
<path d="M1255 142.500H1273" stroke="#999"/>
<use href="#sn" x="1264" y="162"/>
<path d="M1256.500 195H1270M1269 183V194" fill="none" stroke="#7a9a7a" stroke-dasharray="2 1.500"/>
<path d="M1256.500 223H1266M1269 211V221" fill="none" stroke="#777" stroke-dasharray="2 1.500"/><path d="M1269 220 1272 223 1269 226 1266 223Z" fill="#7a9a7a" stroke="#555" stroke-width=".5"/>
<path d="M1257 250.500H1268M1269 239V249" fill="none" stroke="#333" stroke-dasharray="2 1"/><path d="M1269 238 1272 241 1269 244 1266 241Z" fill="#7a9a7a" stroke="#555" stroke-width=".5"/>
<path d="M1257 278.500H1268M1269 266V277" fill="none" stroke="#333" stroke-dasharray="2 1"/><path d="M1259.500 266 1262.500 269 1259.500 272 1256.500 269Z" fill="#7a9a7a" stroke="#555" stroke-width=".5"/>
<path d="M1255 294.500H1273" stroke="#999"/>
<use href="#sn" x="1265" y="314"/>
<path d="M1257 335C1264 337 1266 345 1261 348 1267 347 1271 345 1270 339" fill="none" stroke="#1a8a2a" stroke-width="1.500"/>
<path d="M1256 377 1272 363" stroke="#888"/><circle cx="1264" cy="370" r="2" fill="#8a8" stroke="#1a7a2a"/>
<path d="M1258 392C1268 393 1270 400 1265 404" fill="none" stroke="#888" stroke-width="1.300"/><circle cx="1265" cy="404" r="2.300" fill="#8a8" stroke="#1a7a2a"/><path d="M1270 398C1272 402 1269 404 1268 405" fill="none" stroke="#888"/>
<path d="M1257 419 1263 421C1269 426 1268 430 1263 431M1270 432 1265 431" fill="none" stroke="#888" stroke-width="1.200"/><circle cx="1263.500" cy="421" r="2" fill="#7aa" stroke="#228"/>
<path d="M1257 461 1273 447" stroke="#888"/><circle cx="1264" cy="454" r="2" fill="#8a8" stroke="#1a7a2a"/><path d="M1258 462 1261 455M1261 461 1263 456M1266 454 1269 447M1268 453 1271 447" stroke="#d02020" stroke-width="1.300"/>
<path d="M1255 474.500H1273" stroke="#999"/>
<use href="#sn" x="1265" y="494"/>
<circle cx="1261" cy="520" r="2" fill="#9c9" stroke="#2a8a3a"/><path d="M1256.500 527.500H1269V514" fill="none" stroke="#888"/>
<path d="M1257 549H1264M1260.500 545V553" stroke="#222"/><path d="M1256 555.500H1268M1268.500 544V554" stroke="#333" stroke-dasharray="2 1" fill="none"/>
<text x="1257" y="584" class="b" style="font-size:19px">A</text><path d="M1257 584.500H1272" stroke="#4a9a5a" stroke-width="1.500"/><circle cx="1258.500" cy="583" r="2" fill="#9c9" stroke="#2a8a3a"/>
<path d="M1262 607V618L1267 612.500Z"/>

<!-- palette -->
<g shape-rendering="crispEdges">
<rect x="19" y="628" width="17" height="17" fill="#000"/><rect x="36" y="628" width="17" height="17" fill="#1a1a1a"/><rect x="53" y="628" width="17" height="17" fill="#333"/><rect x="70" y="628" width="17" height="17" fill="#4d4d4d"/><rect x="87" y="628" width="17" height="17" fill="#666"/><rect x="104" y="628" width="17" height="17" fill="#808080"/><rect x="121" y="628" width="17" height="17" fill="#999"/><rect x="138" y="628" width="17" height="17" fill="#b3b3b3"/><rect x="155" y="628" width="17" height="17" fill="#ccc"/><rect x="172" y="628" width="17" height="17" fill="#e6e6e6"/><rect x="189" y="628" width="17" height="17" fill="#ececec"/><rect x="206" y="628" width="17" height="17" fill="#f2f2f2"/><rect x="223" y="628" width="17" height="17" fill="#f9f9f9"/><rect x="240" y="628" width="17" height="17" fill="#fff"/>
<rect x="257" y="628" width="17" height="17" fill="#800000"/><rect x="274" y="628" width="17" height="17" fill="#f00"/><rect x="291" y="628" width="17" height="17" fill="#808000"/><rect x="308" y="628" width="17" height="17" fill="#ff0"/><rect x="325" y="628" width="17" height="17" fill="#008000"/><rect x="342" y="628" width="17" height="17" fill="#0f0"/><rect x="359" y="628" width="17" height="17" fill="#008080"/><rect x="376" y="628" width="17" height="17" fill="#0ff"/><rect x="393" y="628" width="17" height="17" fill="#000080"/><rect x="410" y="628" width="17" height="17" fill="#00f"/><rect x="427" y="628" width="17" height="17" fill="#800080"/><rect x="444" y="628" width="17" height="17" fill="#f0f"/>
<rect x="461" y="628" width="17" height="17" fill="#2b0000"/><rect x="478" y="628" width="17" height="17" fill="#500"/><rect x="495" y="628" width="17" height="17" fill="#800000"/><rect x="512" y="628" width="17" height="17" fill="#a00"/><rect x="529" y="628" width="17" height="17" fill="#d40000"/><rect x="546" y="628" width="17" height="17" fill="#f00"/><rect x="563" y="628" width="17" height="17" fill="#ff2a2a"/><rect x="580" y="628" width="17" height="17" fill="#f55"/><rect x="597" y="628" width="17" height="17" fill="#ff8080"/><rect x="614" y="628" width="17" height="17" fill="#faa"/><rect x="631" y="628" width="17" height="17" fill="#ffd5d5"/>
<rect x="648" y="628" width="17" height="17" fill="#280b0b"/><rect x="665" y="628" width="17" height="17" fill="#501616"/><rect x="682" y="628" width="17" height="17" fill="#782121"/><rect x="699" y="628" width="17" height="17" fill="#a02c2c"/><rect x="716" y="628" width="17" height="17" fill="#c83737"/><rect x="733" y="628" width="17" height="17" fill="#d35f5f"/><rect x="750" y="628" width="17" height="17" fill="#de8787"/><rect x="767" y="628" width="17" height="17" fill="#e9afaf"/><rect x="784" y="628" width="17" height="17" fill="#f4d7d7"/>
<rect x="801" y="628" width="17" height="17" fill="#241c1c"/><rect x="818" y="628" width="17" height="17" fill="#483737"/><rect x="835" y="628" width="17" height="17" fill="#6c5353"/><rect x="852" y="628" width="17" height="17" fill="#916f6f"/><rect x="869" y="628" width="17" height="17" fill="#ac9393"/><rect x="886" y="628" width="17" height="17" fill="#c8b7b7"/><rect x="903" y="628" width="17" height="17" fill="#e3dbdb"/>
<rect x="920" y="628" width="17" height="17" fill="#2b1100"/><rect x="937" y="628" width="17" height="17" fill="#520"/><rect x="954" y="628" width="17" height="17" fill="#803300"/><rect x="971" y="628" width="17" height="17" fill="#a40"/><rect x="988" y="628" width="17" height="17" fill="#d45500"/><rect x="1005" y="628" width="17" height="17" fill="#f60"/><rect x="1022" y="628" width="17" height="17" fill="#ff7f2a"/><rect x="1039" y="628" width="17" height="17" fill="#f95"/><rect x="1056" y="628" width="17" height="17" fill="#ffb380"/><rect x="1073" y="628" width="17" height="17" fill="#fca"/><rect x="1090" y="628" width="17" height="17" fill="#ffe6d5"/>
<rect x="1107" y="628" width="17" height="17" fill="#28170b"/><rect x="1124" y="628" width="17" height="17" fill="#502d16"/><rect x="1141" y="628" width="17" height="17" fill="#784421"/><rect x="1158" y="628" width="17" height="17" fill="#a05a2c"/><rect x="1175" y="628" width="17" height="17" fill="#c87137"/><rect x="1192" y="628" width="17" height="17" fill="#d38d5f"/><rect x="1209" y="628" width="17" height="17" fill="#deaa87"/><rect x="1226" y="628" width="17" height="17" fill="#e9c6af"/><rect x="1243" y="628" width="17" height="17" fill="#f4e3d7"/><rect x="1260" y="628" width="5" height="17" fill="#1f1a17"/>
</g>
<path d="M2 628 18 644M18 628 2 644" stroke="#8a3a30" stroke-width="1.500"/>

<!-- status -->
<text x="2" y="674" textLength="38">Relleno:</text>
<text x="2" y="689" textLength="30">Trazo:</text>
<text x="94" y="689" textLength="27">0,265</text>
<text x="126" y="682" textLength="10">O:</text>
<text x="143" y="682" textLength="20">100</text>
<use href="#up" x="182" y="672" fill="#999"/><use href="#dn" x="182" y="682"/>
<path d="M199 678Q207 671 215 678 207 685 199 678Z" fill="#fff" stroke="#111" stroke-width="1.300"/><circle cx="207" cy="678" r="3" fill="#111"/><path d="M200 674 198 671M204 672 203 669M208 671.500V669M212 672 213 669M215 674 217 671" stroke="#111" stroke-width="1.100"/>
<rect x="229.500" y="678.500" width="11" height="7.500" fill="url(#gy)" stroke="#222"/><path d="M231.500 678V675Q233 670 237 672.500L238 675" fill="none" stroke="#222" stroke-width="1.200"/><circle cx="235" cy="682" r="1" fill="#222"/>
<text x="254" y="682" class="b" textLength="38">▪Capa 1</text>
<path d="M306 676H314L310 681Z"/>
<text x="322" y="682" class="b" textLength="50">Trayecto</text>
<text x="375" y="682" textLength="87">29 nodos en capa</text>
<text x="464" y="682" class="b" textLength="37">Capa 1</text>
<text x="507" y="682" textLength="340">. Pulse en la selección para conmutar los tiradores de escalado/rotación.</text>
<text x="1141" y="673" textLength="9">X:</text>
<text x="1161" y="673" textLength="41">230,94</text>
<text x="1141" y="686" textLength="8">Y:</text>
<text x="1168" y="686" textLength="34">97,14</text>
<text x="1211" y="682" textLength="9">Z:</text>
<text x="1233" y="682" textLength="22">70%</text>
<use href="#up" x="1274" y="672"/><use href="#dn" x="1274" y="682"/>

<!-- taskbar -->
<path d="M5 701 10 699V705L5 706Z" fill="#e04020"/><path d="M11 699 17 700 16 705 11 705Z" fill="#60b030"/><path d="M5 707 10 706V712L4 711Z" fill="#3a70d0"/><path d="M11 706H16L15.500 712 11 712Z" fill="#f0c020"/>
<text x="22" y="711" class="b" style="font-size:11.500px" textLength="30">Inicio</text>
<circle cx="82" cy="707" r="7" fill="#e86a10"/><path d="M82 700a7 7 0 0 1 6 11c1-4-1-7-4-7-2-1-3 0-4 1 1 1 2 2 3 2 0 2-3 3-5 1-1 1 1 5 5 5-3 1-6-1-7-3" fill="#f8b030"/><circle cx="81" cy="707" r="3" fill="#3a50a8"/>
<text x="94" y="711" textLength="127">Artstorm #14 — Day 1: ...</text>
<path d="M246 699 252 706 250 706 253 711 246 715 239 711 242 706 240 706Z" fill="#222" stroke="#555" stroke-width=".5"/><path d="M243 707 246 704 249 707 246 710Z" fill="#eee"/>
<text x="258" y="711" class="b" textLength="130">*logo14.svg - Inkscape</text>
<rect x="400.500" y="699.500" width="14" height="14" fill="#fff" stroke="#3a60a8"/><rect x="399" y="702" width="9" height="9" fill="#2a5ab0"/><text x="400" y="710" style="font-size:8px;fill:#fff;font-weight:bold">W</text>
<text x="420" y="711" textLength="114">logo14 - Microsoft Word</text>
<path d="M567 703H575L574 716H568Z" fill="#cdd8e8" stroke="#667"/><path d="M569 708 566 698" stroke="#e04020" stroke-width="1.300"/><path d="M571 708V698" stroke="#30a040" stroke-width="1.300"/><path d="M573 708 577 699" stroke="#f0c020" stroke-width="1.300"/>
<text x="582" y="711" textLength="64">Dibujo - Paint</text>
<path d="M727 703 729 701H733L735 703H741V713H727Z" fill="#f4d868" stroke="#9a8020"/><path d="M727 713 729 706H742L740 713Z" fill="#fbe890" stroke="#9a8020"/>
<text x="746" y="711" textLength="71">Tutorial-logo14</text>
<svg x="1011" y="696" width="110" height="22"><text x="5" y="15" style="fill:#808080" textLength="122">Búsqueda en el escritorio</text></svg>
<circle cx="1133" cy="705" r="4.500" fill="#fff" stroke="#2a60b0" stroke-width="1.800"/><path d="M1130 708.500 1126 713" stroke="#2a60b0" stroke-width="2.400"/>
<text x="1163" y="712" class="b" style="font-size:13px">«</text>
<circle cx="1184" cy="707" r="7" fill="#e01020"/><path d="M1180 711V703L1184 707 1188 703V711" fill="none" stroke="#fff" stroke-width="1.800"/>
<circle cx="1202" cy="707" r="7" fill="#3a90e0"/><text x="1200" y="711.500" class="b" style="fill:#fff;font-size:12px">i</text>
<text x="1217" y="711" textLength="51">11:23 a.m.</text>
</svg>
</body></html>
